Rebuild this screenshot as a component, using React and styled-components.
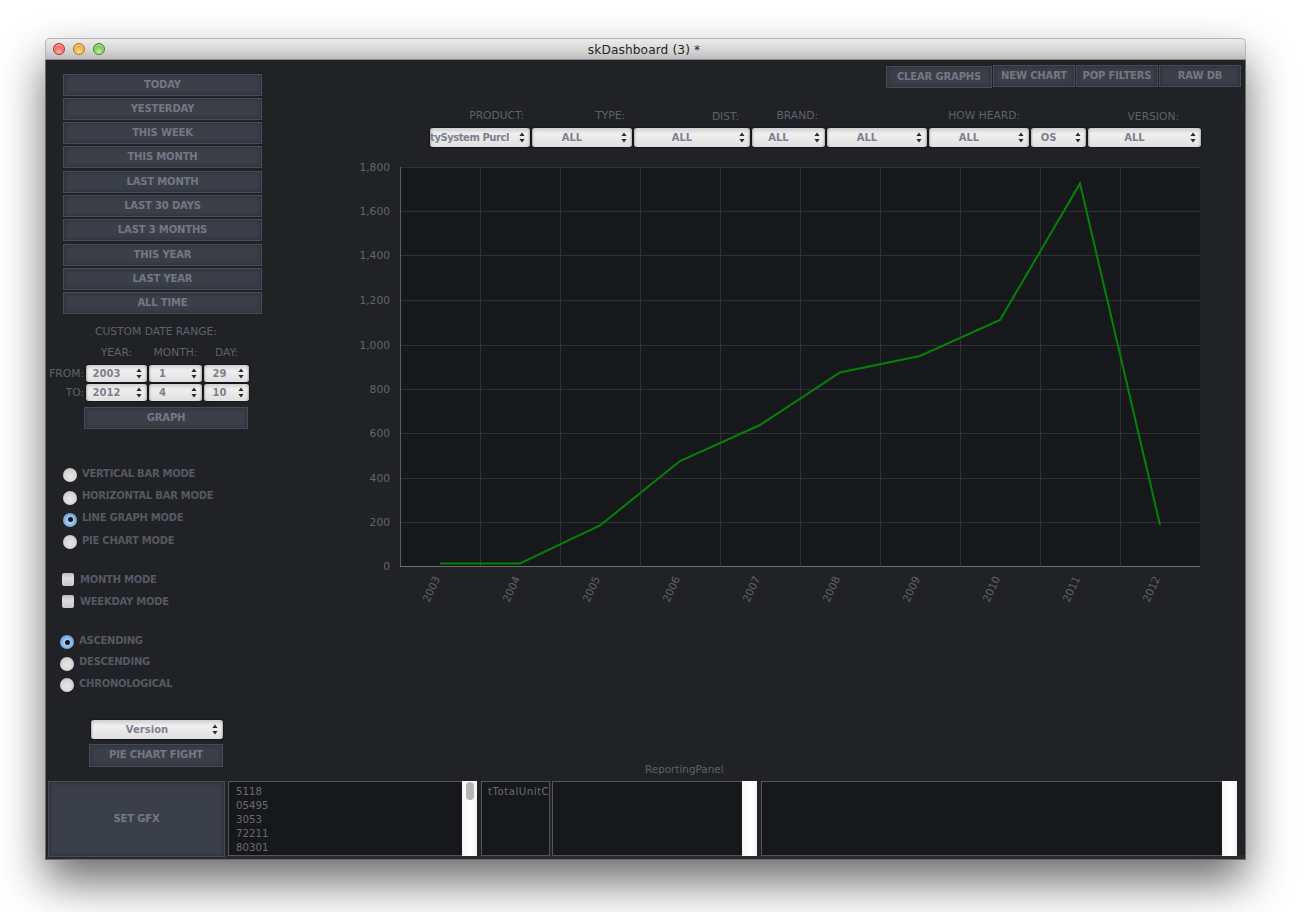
import React from 'react';
import styled, { createGlobalStyle } from 'styled-components';

const Global = createGlobalStyle`
  html, body { margin: 0; padding: 0; background: #fff; height: 912px; overflow: hidden; }
  * { box-sizing: border-box; }
`;

const Page = styled.div`
  padding: 38px 0 0 45px;
  font-family: "DejaVu Sans", Verdana, sans-serif;
`;
const Window = styled.div`
  width: 1201px;
  height: 822px;
  display: flex;
  flex-direction: column;
  border-radius: 5px 5px 0 0;
  box-shadow: 0 22px 45px rgba(0, 0, 0, 0.58);
`;
const TitleBar = styled.div`
  height: 22px;
  display: flex;
  align-items: center;
  padding-left: 7px;
  gap: 8px;
  background: linear-gradient(#ececec, #d4d4d4 60%, #bcbcbc);
  border: 1px solid #b4b4b4;
  border-bottom: 1px solid #8c8c8c;
  border-radius: 5px 5px 0 0;
`;
const Light = styled.span`
  width: 12px;
  height: 12px;
  border-radius: 50%;
  border: 1px solid ${p => p.$edge};
  background: radial-gradient(circle at 50% 80%, ${p => p.$glow}, ${p => p.$base} 65%),
    ${p => p.$base};
  box-shadow: inset 0 2px 1px rgba(255, 255, 255, 0.35);
`;
const Title = styled.div`
  flex: 1;
  text-align: center;
  font-size: 12.2px;
  letter-spacing: 0.1px;
  color: #262626;
  margin-right: 70px;
  padding-top: 1px;
`;
const Body = styled.div`
  height: 800px;
  display: flex;
  flex-direction: column;
  background: linear-gradient(#212226 calc(100% - 4px), #2a2b2e 0);
  border-left: 1px solid #6a6a6a;
  border-right: 1px solid #6a6a6a;
  border-bottom: 1px solid #6a6a6a;
`;
const Upper = styled.div`
  height: 721px;
  display: flex;
`;
const Sidebar = styled.div`
  width: 254px;
  flex: none;
  display: flex;
  flex-direction: column;
`;
const Button = styled.div`
  width: ${p => p.$w}px;
  height: ${p => p.$h || 22}px;
  display: flex;
  align-items: center;
  justify-content: center;
  padding-bottom: 2px;
  font-size: 10px;
  font-weight: 700;
  letter-spacing: -0.15px;
  color: #747883;
  background: #3b3f48;
  border: 1px solid #474b54;
  box-shadow: inset 0 0 5px #2b2d33;
  white-space: nowrap;
`;
const RangeStack = styled.div`
  margin: 14px 0 0 17px;
  display: flex;
  flex-direction: column;
  gap: 2px;
  & > :nth-child(5), & > :nth-child(8) { margin-top: 1px; }
`;
const Label = styled.div`
  font-size: 10.7px;
  line-height: 14px;
  color: #5f616b;
  white-space: nowrap;
`;
const CustomLabel = styled(Label)`
  margin: 11px 0 0 49px;
`;
const DateGrid = styled.div`
  display: grid;
  grid-template-columns: 38px 61px 53px 45px;
  column-gap: 2px;
  align-items: center;
  margin-top: ${p => p.$top}px;
`;
const HeadCell = styled(Label)`
  text-align: center;
`;
const RowLabel = styled(Label)`
  text-align: right;
  margin-left: -1px;
`;
const SelectBox = styled.div`
  height: ${p => p.$h || 19}px;
  width: ${p => (p.$w ? p.$w + 'px' : 'auto')};
  display: flex;
  align-items: center;
  padding-right: 5px;
  border-radius: 3px;
  overflow: hidden;
  background: linear-gradient(#cfcfcf, #efefef 30%, #e9e9e9 60%, #dfdfdf);
  box-shadow: 0 0 2px #000, inset 3px 0 2px -2px #aaa, inset -3px 0 2px -2px #aaa;
`;
const SelectText = styled.span`
  flex: 1;
  min-width: 0;
  text-align: center;
  padding: 0 ${p => (p.$padR === undefined ? 6 : p.$padR)}px 0 0;
  font-size: 10px;
  font-weight: 700;
  letter-spacing: ${p => p.$ls || 0}px;
  color: #7d808d;
  white-space: nowrap;
  overflow: hidden;
`;
const Arrows = styled.svg`
  width: 6px;
  height: 11px;
  flex: none;
  margin-left: 3px;
`;
const Select = ({ children, padR, ls, ...rest }) => (
  <SelectBox {...rest}>
    <SelectText $padR={padR} $ls={ls}>{children}</SelectText>
    <Arrows viewBox="0 0 6 11">
      <path d="M3 0.5 L5.6 4 H0.4 Z M3 10.5 L5.6 7 H0.4 Z" fill="#2c2c30" />
    </Arrows>
  </SelectBox>
);
const GraphWrap = styled.div`
  margin: 6px 0 0 38px;
`;
const OptionGroup = styled.div`
  display: flex;
  flex-direction: column;
  margin: ${p => p.$top}px 0 0 ${p => p.$left}px;
`;
const OptionRow = styled.div`
  height: ${p => p.$h}px;
  display: flex;
  align-items: center;
  gap: ${p => p.$gap}px;
  font-size: 10px;
  font-weight: 700;
  letter-spacing: -0.25px;
  color: #565862;
  white-space: nowrap;
`;
const Radio = styled.span`
  width: 14px;
  height: 14px;
  flex: none;
  margin-top: 4px;
  border-radius: 50%;
  display: flex;
  align-items: center;
  justify-content: center;
  background: ${p => (p.$on
    ? 'radial-gradient(circle at 50% 55%, #cfe3f8 0, #8db8e8 45%, #4c86cc 100%)'
    : 'radial-gradient(circle at 50% 60%, #e6e6e6 0, #d6d6d6 55%, #a8a8a8 100%)')};
  &::after {
    content: '';
    display: ${p => (p.$on ? 'block' : 'none')};
    width: 5px;
    height: 5px;
    border-radius: 50%;
    background: #0d1420;
  }
`;
const Check = styled.span`
  width: 12px;
  height: 13px;
  flex: none;
  border-radius: 2px;
  background: linear-gradient(#bdbdbd, #dcdcdc 40%, #c8c8c8);
`;
const VersionWrap = styled.div`
  margin: 26px 0 0 45px;
`;
const PieWrap = styled.div`
  margin: 5px 0 0 43px;
`;
const Main = styled.div`
  flex: 1;
  min-width: 0;
  display: flex;
  flex-direction: column;
`;
const TopBar = styled.div`
  display: flex;
  justify-content: flex-end;
  align-items: flex-start;
  gap: 1px;
  padding: 5px 4px 0 0;
`;
const Drop = styled.div`
  margin-top: 1px;
`;
const Filters = styled.div`
  display: grid;
  grid-template-columns: 100px 100px 116px 73px 100px 100px 55px 113px;
  column-gap: 2px;
  row-gap: 5px;
  margin: 21px 0 0 130px;
  width: 771px;
`;
const FilterLabel = styled(Label)`
  text-align: right;
  height: 14px;
  padding-right: ${p => p.$pr || 0}px;
  transform: translateY(${p => p.$drop || 0}px);
`;
const ChartSvg = styled.svg`
  display: block;
  width: 900px;
  height: 450px;
  margin: 13px 0 0 40px;
  font-family: "DejaVu Sans", Verdana, sans-serif;
`;
const PanelTitle = styled.div`
  margin-top: auto;
  padding: 0 0 5px 345px;
  font-size: 10.4px;
  line-height: 14px;
  color: #5f616b;
`;
const Bottom = styled.div`
  display: flex;
  align-items: flex-start;
  padding-left: 2px;
`;
const ListBox = styled.div`
  width: ${p => p.$w}px;
  height: 75px;
  flex: none;
  margin-left: ${p => p.$ml}px;
  display: flex;
  background: #17181c;
  border: 1px solid #53545d;
  border-right: ${p => (p.$bar ? 'none' : '1px solid #53545d')};
`;
const ListText = styled.div`
  flex: 1;
  min-width: 0;
  overflow: hidden;
  padding: 3px 0 0 ${p => p.$pl || 7}px;
  font-size: 10.2px;
  line-height: 14px;
  letter-spacing: ${p => p.$ls || 0}px;
  color: #696b74;
  white-space: nowrap;
`;
const ScrollTrack = styled.div`
  width: 15px;
  height: 75px;
  margin-top: -1px;
  flex: none;
  background: linear-gradient(90deg, #f4f4f4, #fff 60%, #f2f2f2);
  padding: 1px 0 0 4px;
`;
const ScrollThumb = styled.div`
  width: 8px;
  height: 18px;
  border-radius: 4px;
  background: #b4b4b4;
`;

const ranges = ['TODAY', 'YESTERDAY', 'THIS WEEK', 'THIS MONTH', 'LAST MONTH', 'LAST 30 DAYS', 'LAST 3 MONTHS', 'THIS YEAR', 'LAST YEAR', 'ALL TIME'];
const yTicks = [
  ['0', 566], ['200', 522], ['400', 478], ['600', 433], ['800', 389],
  ['1,000', 345], ['1,200', 300], ['1,400', 255], ['1,600', 211], ['1,800', 167],
];
const years = [2003, 2004, 2005, 2006, 2007, 2008, 2009, 2010, 2011, 2012];
const points = '440,563.5 520,563.5 600,525.5 680,461 760,425 840,372.5 920,356 1000,320 1080,183.5 1160,525';

const Chart = () => (
  <ChartSvg viewBox="340 160 900 450">
    <rect x="400" y="167" width="800" height="399" fill="#17181c" />
    {yTicks.map(([t, yy], i) => {
      const y = yy + 0.5;
      return (
        <g key={t}>
          {i > 0 && <line x1="400" x2="1200" y1={y} y2={y} stroke="#303136" />}
          <text x="390" y={y + 3.5} textAnchor="end" fontSize="10.7" fill="#63656d">{t}</text>
        </g>
      );
    })}
    {years.map((yr, i) => (
      <g key={yr}>
        {i < 9 && <line x1={480.5 + i * 80} x2={480.5 + i * 80} y1="167" y2="566" stroke="#303136" />}
        <text
          transform={`translate(${429 + i * 80} 603) rotate(-65)`}
          fontSize="10.7"
          fill="#5f616b"
        >
          {yr}
        </text>
      </g>
    ))}
    <line x1="400.5" x2="400.5" y1="167" y2="567" stroke="#5c5d64" />
    <line x1="400" x2="1200" y1="566.5" y2="566.5" stroke="#6d6e75" />
    <polyline points={points} fill="none" stroke="#058205" strokeWidth="2" />
  </ChartSvg>
);

export default function App() {
  return (
    <Page>
      <Global />
      <Window>
        <TitleBar>
          <Light $base="#ec5f5a" $glow="#ffb0a8" $edge="#b03a38" />
          <Light $base="#eea63a" $glow="#ffe08a" $edge="#b07a20" />
          <Light $base="#74c04e" $glow="#c6f09a" $edge="#4c8a30" />
          <Title>skDashboard (3) *</Title>
        </TitleBar>
        <Body>
          <Upper>
            <Sidebar>
              <RangeStack>
                {ranges.map(r => <Button key={r} $w={199}>{r}</Button>)}
              </RangeStack>
              <CustomLabel>CUSTOM DATE RANGE:</CustomLabel>
              <DateGrid $top={7}>
                <span />
                <HeadCell>YEAR:</HeadCell>
                <HeadCell>MONTH:</HeadCell>
                <HeadCell>DAY:</HeadCell>
              </DateGrid>
              <DateGrid $top={5}>
                <RowLabel>FROM:</RowLabel>
                <Select $h={17}>2003</Select>
                <Select $h={17} padR={12}>1</Select>
                <Select $h={17} padR={0}>29</Select>
              </DateGrid>
              <DateGrid $top={2}>
                <RowLabel>TO:</RowLabel>
                <Select $h={17}>2012</Select>
                <Select $h={17} padR={12}>4</Select>
                <Select $h={17} padR={0}>10</Select>
              </DateGrid>
              <GraphWrap><Button $w={164}>GRAPH</Button></GraphWrap>
              <OptionGroup $top={33} $left={17}>
                <OptionRow $h={22.4} $gap={5}><Radio />VERTICAL BAR MODE</OptionRow>
                <OptionRow $h={22.4} $gap={5}><Radio />HORIZONTAL BAR MODE</OptionRow>
                <OptionRow $h={22.4} $gap={5}><Radio $on />LINE GRAPH MODE</OptionRow>
                <OptionRow $h={22.4} $gap={5}><Radio />PIE CHART MODE</OptionRow>
              </OptionGroup>
              <OptionGroup $top={16.7} $left={16}>
                <OptionRow $h={22} $gap={6}><Check />MONTH MODE</OptionRow>
                <OptionRow $h={22} $gap={6}><Check />WEEKDAY MODE</OptionRow>
              </OptionGroup>
              <OptionGroup $top={17} $left={14}>
                <OptionRow $h={21.5} $gap={5}><Radio $on />ASCENDING</OptionRow>
                <OptionRow $h={21.5} $gap={5}><Radio />DESCENDING</OptionRow>
                <OptionRow $h={21.5} $gap={5}><Radio />CHRONOLOGICAL</OptionRow>
              </OptionGroup>
              <VersionWrap><Select $w={132}>Version</Select></VersionWrap>
              <PieWrap><Button $w={134} $h={23}>PIE CHART FIGHT</Button></PieWrap>
            </Sidebar>
            <Main>
              <TopBar>
                <Drop><Button $w={106}>CLEAR GRAPHS</Button></Drop>
                <Button $w={82}>NEW CHART</Button>
                <Button $w={82}>POP FILTERS</Button>
                <Button $w={82}>RAW DB</Button>
              </TopBar>
              <Filters>
                <FilterLabel $pr={6}>PRODUCT:</FilterLabel>
                <FilterLabel $pr={7}>TYPE:</FilterLabel>
                <FilterLabel $pr={11} $drop={1}>DIST:</FilterLabel>
                <FilterLabel $pr={7}>BRAND:</FilterLabel>
                <FilterLabel />
                <FilterLabel $pr={9}>HOW HEARD:</FilterLabel>
                <FilterLabel />
                <FilterLabel $pr={22} $drop={1}>VERSION:</FilterLabel>
                <Select padR={7} ls={-0.45}>tySystem Purcl</Select>
                <Select>ALL</Select>
                <Select>ALL</Select>
                <Select>ALL</Select>
                <Select>ALL</Select>
                <Select>ALL</Select>
                <Select>OS</Select>
                <Select>ALL</Select>
              </Filters>
              <Chart />
              <PanelTitle>ReportingPanel</PanelTitle>
            </Main>
          </Upper>
          <Bottom>
            <Button $w={177} $h={76}>SET GFX</Button>
            <ListBox $w={249} $ml={3} $bar>
              <ListText>5118<br />05495<br />3053<br />72211<br />80301</ListText>
              <ScrollTrack><ScrollThumb /></ScrollTrack>
            </ListBox>
            <ListBox $w={69} $ml={4}>
              <ListText $pl={6} $ls={0.5}>tTotalUnitC</ListText>
            </ListBox>
            <ListBox $w={205} $ml={2} $bar>
              <ListText />
              <ScrollTrack />
            </ListBox>
            <ListBox $w={476} $ml={4} $bar>
              <ListText />
              <ScrollTrack />
            </ListBox>
          </Bottom>
        </Body>
      </Window>
    </Page>
  );
}
